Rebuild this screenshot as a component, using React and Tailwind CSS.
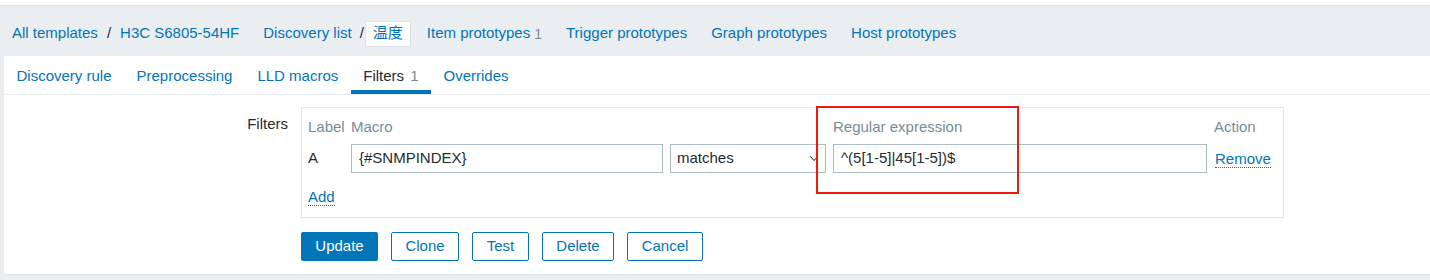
import React from 'react';

const font = { fontFamily: '"Liberation Sans", Arial, "Noto Sans CJK SC", sans-serif' };

const navLinks = [
  { label: 'Item prototypes', count: 1 },
  { label: 'Trigger prototypes' },
  { label: 'Graph prototypes' },
  { label: 'Host prototypes' },
];

const tabs = [
  { label: 'Discovery rule' },
  { label: 'Preprocessing' },
  { label: 'LLD macros' },
  { label: 'Filters', count: 1, active: true },
  { label: 'Overrides' },
];

const Chevron = () => (
  <svg width="10" height="7" viewBox="0 0 10 7" className="text-[#4f4f4f]">
    <path d="M1 1l4 4.5L9 1" fill="none" stroke="currentColor" strokeWidth="1.1" />
  </svg>
);

const App = () => {
  return (
    <div className="h-[280px] bg-[#ebeef0] overflow-hidden text-[15px] text-[#1f2c33]" style={font}>
      <div className="h-[6px] bg-white border-b border-[#dfe4e7]" />

      {/* breadcrumbs */}
      <nav className="h-[50px] pt-[5px] flex items-center pl-[12px] text-[#0275b8]">
        <span>All templates</span>
        <span className="text-[#1f2c33] mx-[9px]">/</span>
        <span>H3C S6805-54HF</span>
        <span className="ml-[24px]">Discovery list</span>
        <span className="text-[#1f2c33] ml-[8px] mr-[1px]">/</span>
        <span className="bg-white border border-[#dfe4e7] rounded-[2px] px-[7px] h-[26px] flex items-center">温度</span>
        {navLinks.map((l) => (
          <span key={l.label} className="ml-[16px] mr-[8px]">
            {l.label}
            {l.count && <sup className="text-[#768d99] text-[14px] ml-[4px] relative top-[1px]">{l.count}</sup>}
          </span>
        ))}
      </nav>

      <div className="ml-[4px] bg-white h-[219px] border-b border-[#dfe4e7] relative">
        {/* tabs */}
        <div className="flex h-[39px] border-b border-[#ebeef0]">
          {tabs.map((t) => (
            <div
              key={t.label}
              className={
                'px-[12.5px] pt-[4px] flex items-center border-b-[4px] ' +
                (t.active ? 'border-[#0275b8] text-[#1f2c33]' : 'border-transparent text-[#0275b8]')
              }
            >
              <span className="relative top-[1px]">{t.label}</span>
              {t.count && <span className="text-[#768d99] ml-[6px] relative top-[1px]">{t.count}</span>}
            </div>
          ))}
        </div>

        {/* form */}
        <div className="flex pt-[12px]">
          <div className="w-[284px] text-right pt-[6px]">Filters</div>
          <div className="ml-[13px] flex flex-col">
            <div className="w-[983px] h-[111px] border border-[#e3e7e9] px-[6px] pt-[9px]">
              <div className="flex text-[#768d99] h-[20px] items-center">
                <span className="w-[43px]">Label</span>
                <span className="w-[482px]">Macro</span>
                <span className="w-[381px]">Regular expression</span>
                <span>Action</span>
              </div>
              <div className="flex items-center mt-[7px] h-[29px]">
                <span className="w-[43px]">A</span>
                <div className="w-[312px] h-[29px] border border-[#acbbc2] flex items-center px-[7px]">{'{#SNMPINDEX}'}</div>
                <div className="ml-[7px] w-[156px] h-[29px] border border-[#acbbc2] flex items-center justify-between px-[6px]">
                  <span>matches</span>
                  <Chevron />
                </div>
                <div className="ml-[7px] w-[374px] h-[29px] border border-[#acbbc2] flex items-center px-[7px]">^(5[1-5]|45[1-5])$</div>
                <span className="ml-[8px] text-[#0275b8] border-b border-dotted border-[#0275b8] leading-[17px]">Remove</span>
              </div>
              <div className="mt-[13px]">
                <span className="text-[#0275b8] border-b border-dotted border-[#0275b8] inline-block leading-[17px]">Add</span>
              </div>
            </div>

            <div className="flex gap-[13px] mt-[14px]">
              <button className="h-[29px] w-[77px] rounded-[2px] bg-[#0275b8] text-white">Update</button>
              <button className="h-[29px] w-[68px] rounded-[2px] border border-[#0275b8] text-[#0275b8]">Clone</button>
              <button className="h-[29px] w-[57px] rounded-[2px] border border-[#0275b8] text-[#0275b8]">Test</button>
              <button className="h-[29px] w-[72px] rounded-[2px] border border-[#0275b8] text-[#0275b8]">Delete</button>
              <button className="h-[29px] w-[76px] rounded-[2px] border border-[#0275b8] text-[#0275b8]">Cancel</button>
            </div>
          </div>
        </div>

        {/* annotation box */}
        <div className="absolute left-[812px] top-[50px] w-[203px] h-[88px] border-2 border-[#f0190f]" />
      </div>
    </div>
  );
};

export default App;
